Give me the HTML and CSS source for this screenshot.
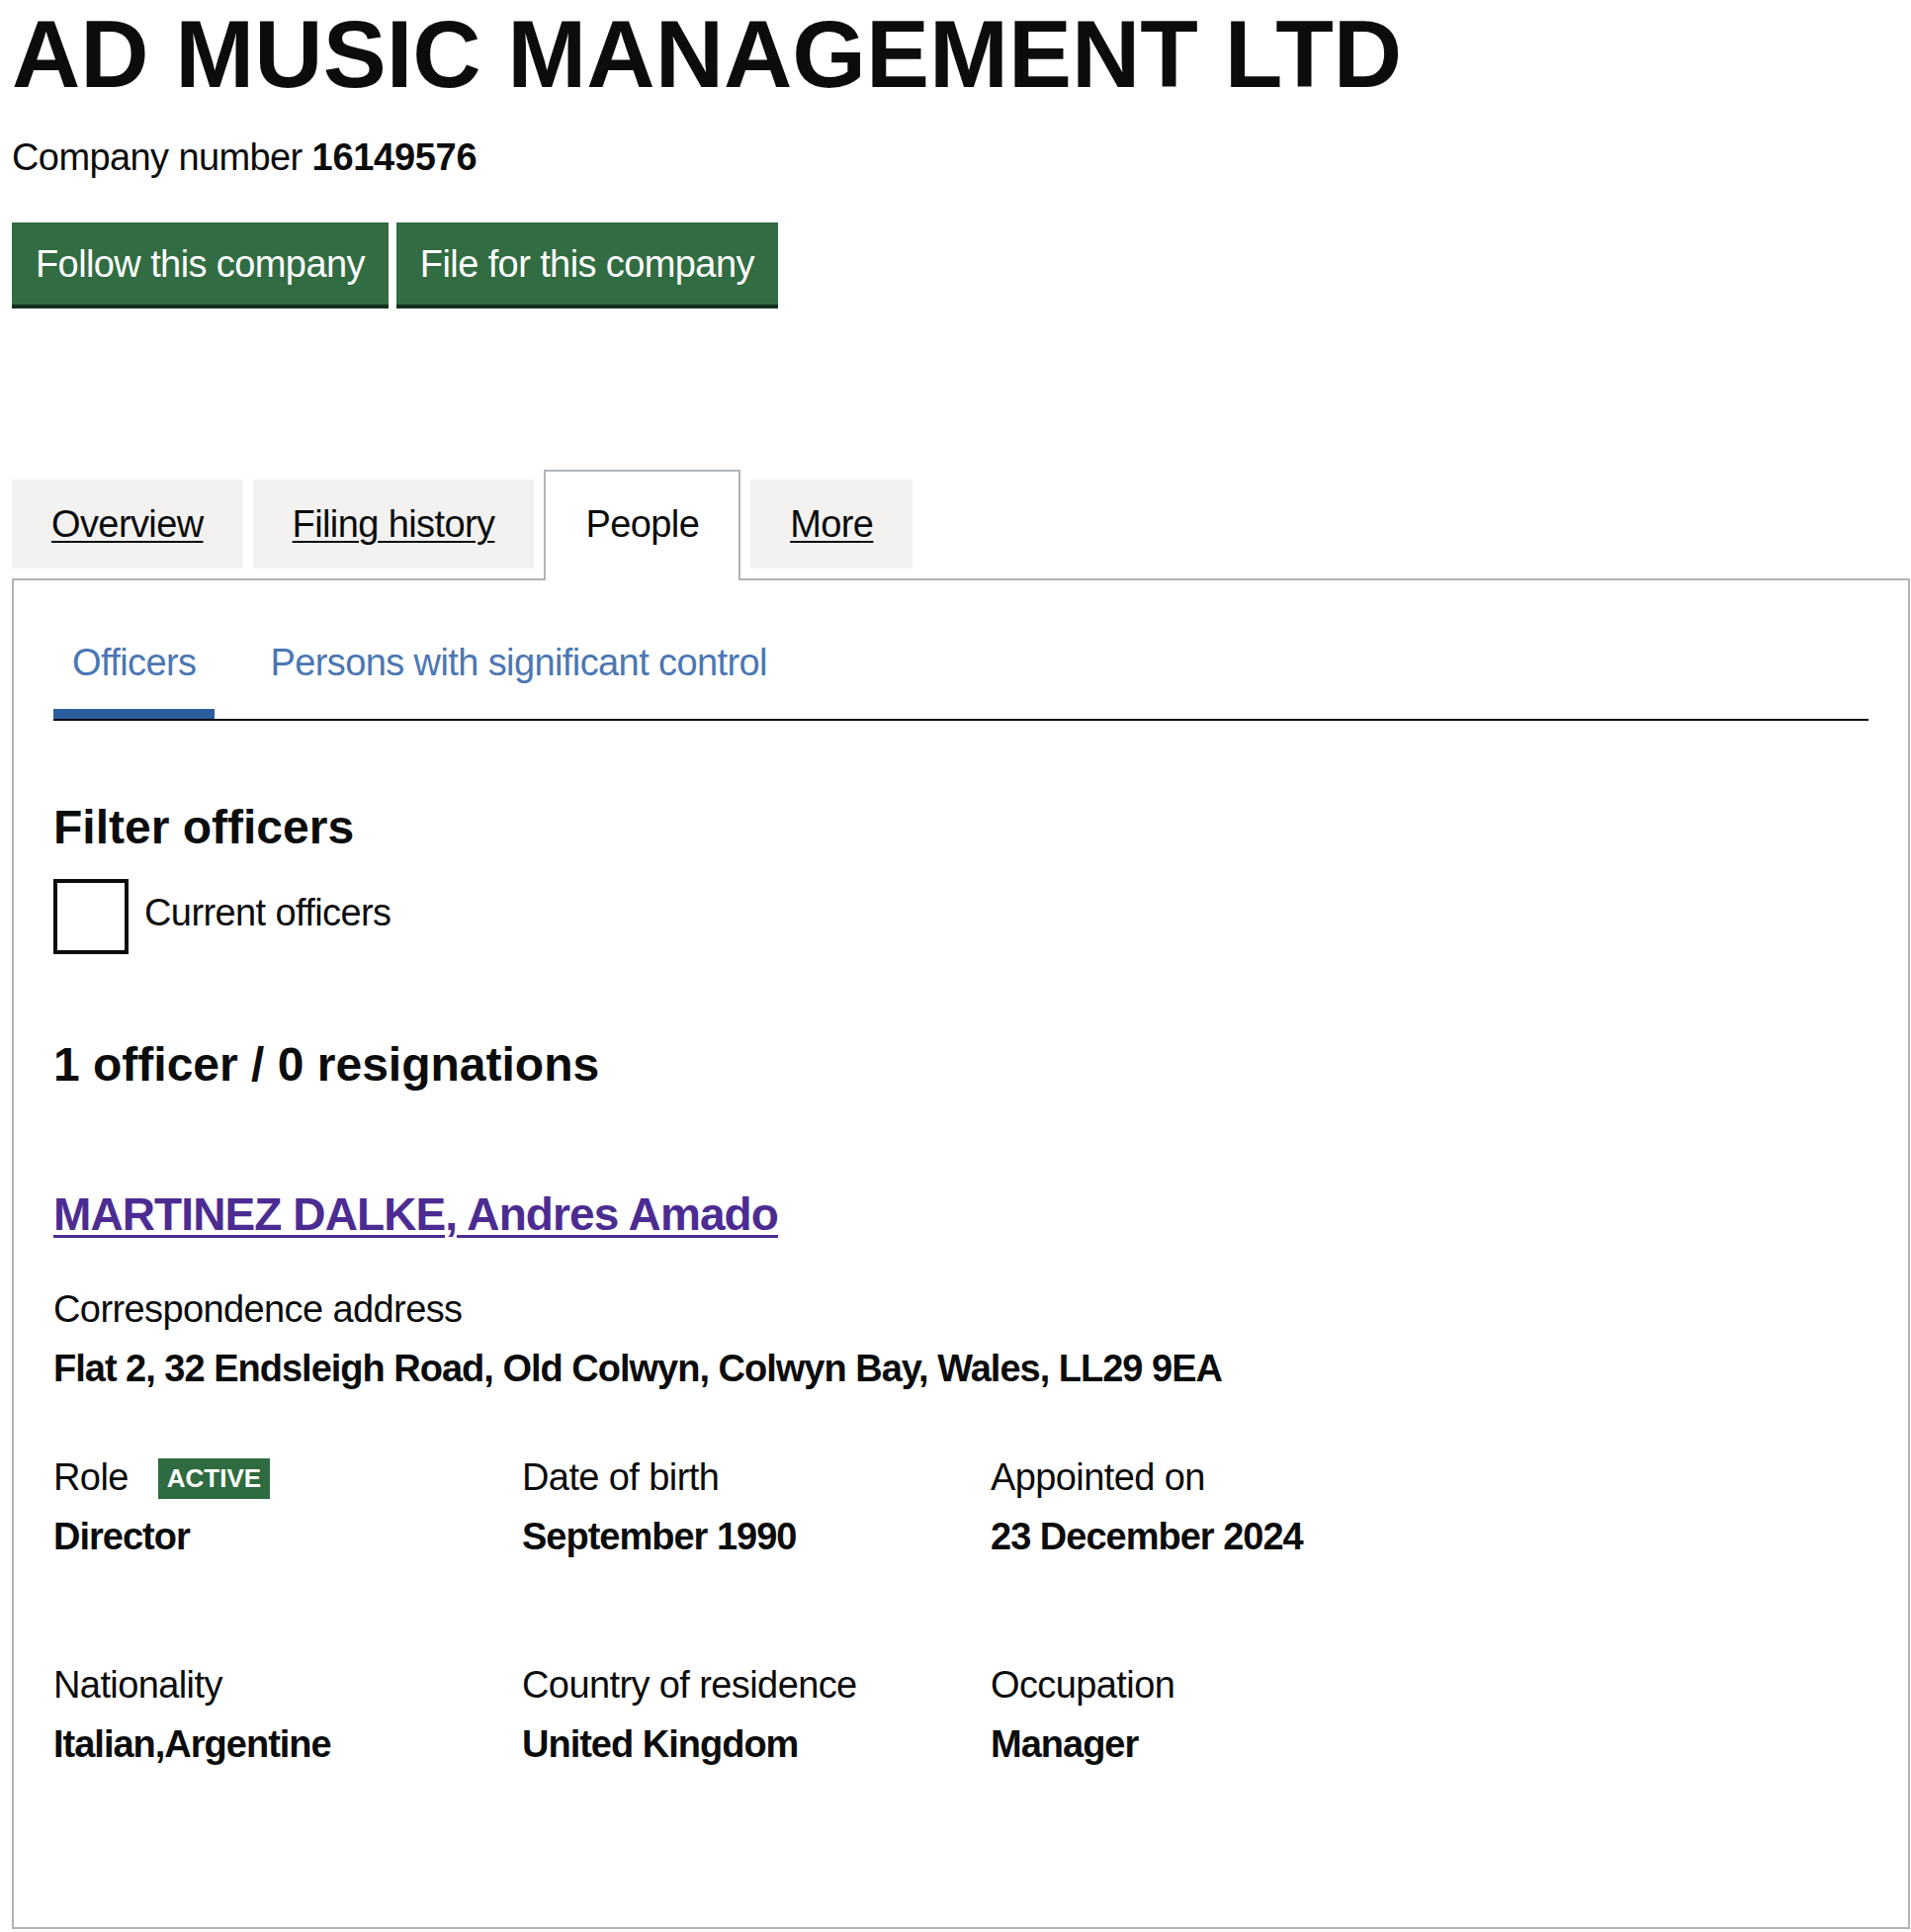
FILE: index.html
```html
<!DOCTYPE html>
<html lang="en">
<head>
    <meta charset="UTF-8">
    <meta name="viewport" content="width=device-width, initial-scale=1.0">
    <title>AD MUSIC MANAGEMENT LTD - People</title>
    <link rel="stylesheet" href="styles.css">
</head>
<body>
    <div class="page">
        <h1 class="company-name">AD MUSIC MANAGEMENT LTD</h1>
        <p class="company-number">Company number <strong>16149576</strong></p>

        <div class="company-actions">
            <a href="#" class="button">Follow this company</a>
            <a href="#" class="button">File for this company</a>
        </div>

        <div class="tabs">
            <ul class="tab-list">
                <li class="tab"><a href="#">Overview</a></li>
                <li class="tab"><a href="#">Filing history</a></li>
                <li class="tab tab-selected"><span>People</span></li>
                <li class="tab"><a href="#">More</a></li>
            </ul>

            <div class="tab-panel">
                <ul class="sub-nav">
                    <li class="sub-nav-item active"><a href="#">Officers</a></li>
                    <li class="sub-nav-item"><a href="#">Persons with significant control</a></li>
                </ul>

                <h2 class="filter-heading">Filter officers</h2>
                <div class="checkbox">
                    <input type="checkbox" id="currentOfficers">
                    <label for="currentOfficers">Current officers</label>
                </div>

                <h2 class="officer-count">1 officer / 0 resignations</h2>

                <div class="appointment">
                    <h3 class="officer-name"><a href="#">MARTINEZ DALKE, Andres Amado</a></h3>

                    <dl class="address">
                        <dt>Correspondence address</dt>
                        <dd>Flat 2, 32 Endsleigh Road, Old Colwyn, Colwyn Bay, Wales, LL29 9EA</dd>
                    </dl>

                    <div class="details-row">
                        <dl>
                            <dt>Role <span class="tag">Active</span></dt>
                            <dd>Director</dd>
                        </dl>
                        <dl>
                            <dt>Date of birth</dt>
                            <dd>September 1990</dd>
                        </dl>
                        <dl>
                            <dt>Appointed on</dt>
                            <dd>23 December 2024</dd>
                        </dl>
                    </div>

                    <div class="details-row second">
                        <dl>
                            <dt>Nationality</dt>
                            <dd>Italian,Argentine</dd>
                        </dl>
                        <dl>
                            <dt>Country of residence</dt>
                            <dd>United Kingdom</dd>
                        </dl>
                        <dl>
                            <dt>Occupation</dt>
                            <dd>Manager</dd>
                        </dl>
                    </div>
                </div>
            </div>
        </div>
    </div>
</body>
</html>
```

FILE: styles.css
```css
html, body {
    margin: 0;
    padding: 0;
    background: #fff;
}
body {
    font-family: "Liberation Sans", Arial, sans-serif;
    color: #0b0c0c;
    font-size: 38px;
    line-height: 50px;
    letter-spacing: -0.6px;
}
.page {
    width: 1920px;
    margin-left: 12px;
    padding-top: 5px;
}
.company-name {
    font-size: 96px;
    line-height: 100px;
    font-weight: 700;
    letter-spacing: 0;
    margin: 0 0 29px;
}
.company-number {
    margin: 0 0 41px;
}
.company-number strong {
    letter-spacing: -0.3px;
}
.company-actions {
    display: flex;
    gap: 8px;
}
.button {
    display: inline-block;
    background-color: #316c42;
    color: #fff;
    font-size: 38px;
    line-height: 45px;
    padding: 16px 20px 14px;
    border: 4px solid transparent;
    box-shadow: 0 4px 0 #14301d;
    text-decoration: none;
}

/* tabs */
.tabs {
    margin-top: 177px;
}
.tab-list {
    display: flex;
    align-items: flex-start;
    list-style: none;
    margin: 0;
    padding: 0;
}
.tab {
    margin-right: 10px;
    padding: 20px 40px;
    background-color: #f3f2f1;
}
.tab a {
    color: #0b0c0c;
    text-decoration: underline;
    text-decoration-thickness: 2px;
    text-underline-offset: 4px;
}
.tab-selected {
    position: relative;
    margin-top: -10px;
    margin-bottom: -2px;
    padding: 28px 40px 32px;
    background-color: #fff;
    border: 2px solid #b1b4b6;
    border-bottom: 0;
}
.tab-panel {
    border: 2px solid #b1b4b6;
    padding: 58px 40px 160px;
}

/* officers / psc sub navigation */
.sub-nav {
    display: flex;
    list-style: none;
    margin: 0;
    padding: 0;
    border-bottom: 2px solid #0b0c0c;
}
.sub-nav-item {
    margin-right: 37px;
    padding: 0 19px 22px;
    border-bottom: 10px solid transparent;
}
.sub-nav-item.active {
    border-bottom-color: #2b5e9c;
}
.sub-nav-item a {
    color: #4b77b3;
    text-decoration: none;
}

.filter-heading,
.officer-count {
    font-size: 48px;
    line-height: 50px;
    font-weight: 700;
    letter-spacing: 0;
}
.filter-heading {
    margin: 83px 0 27px;
}
.checkbox {
    display: flex;
    align-items: flex-start;
    gap: 16px;
}
.checkbox input {
    appearance: none;
    -webkit-appearance: none;
    box-sizing: border-box;
    width: 76px;
    height: 76px;
    margin: 0;
    border: 4px solid #0b0c0c;
    background: #fff;
}
.checkbox label {
    margin-top: 9px;
}
.officer-count {
    margin: 87px 0 98px;
}

/* appointment */
.officer-name {
    font-size: 46px;
    line-height: 56px;
    font-weight: 700;
    letter-spacing: -0.9px;
    margin: 0 0 43px;
}
.officer-name a {
    color: #4c2c92;
    text-decoration-thickness: 3px;
    text-underline-offset: 5px;
}
.appointment dl {
    margin: 0;
}
.appointment dt {
    font-weight: 400;
}
.appointment dd {
    margin: 10px 0 0;
    font-weight: 700;
    letter-spacing: -1px;
}
.details-row {
    display: grid;
    grid-template-columns: repeat(4, 1fr);
    column-gap: 60px;
    margin-top: 60px;
}
.details-row.second {
    margin-top: 100px;
}
.tag {
    display: inline-block;
    margin-left: 20px;
    padding: 6px 9px;
    background-color: #2f6b40;
    color: #fff;
    font-size: 26px;
    line-height: 29px;
    font-weight: 700;
    letter-spacing: 0;
    text-transform: uppercase;
    vertical-align: 3px;
}
```
